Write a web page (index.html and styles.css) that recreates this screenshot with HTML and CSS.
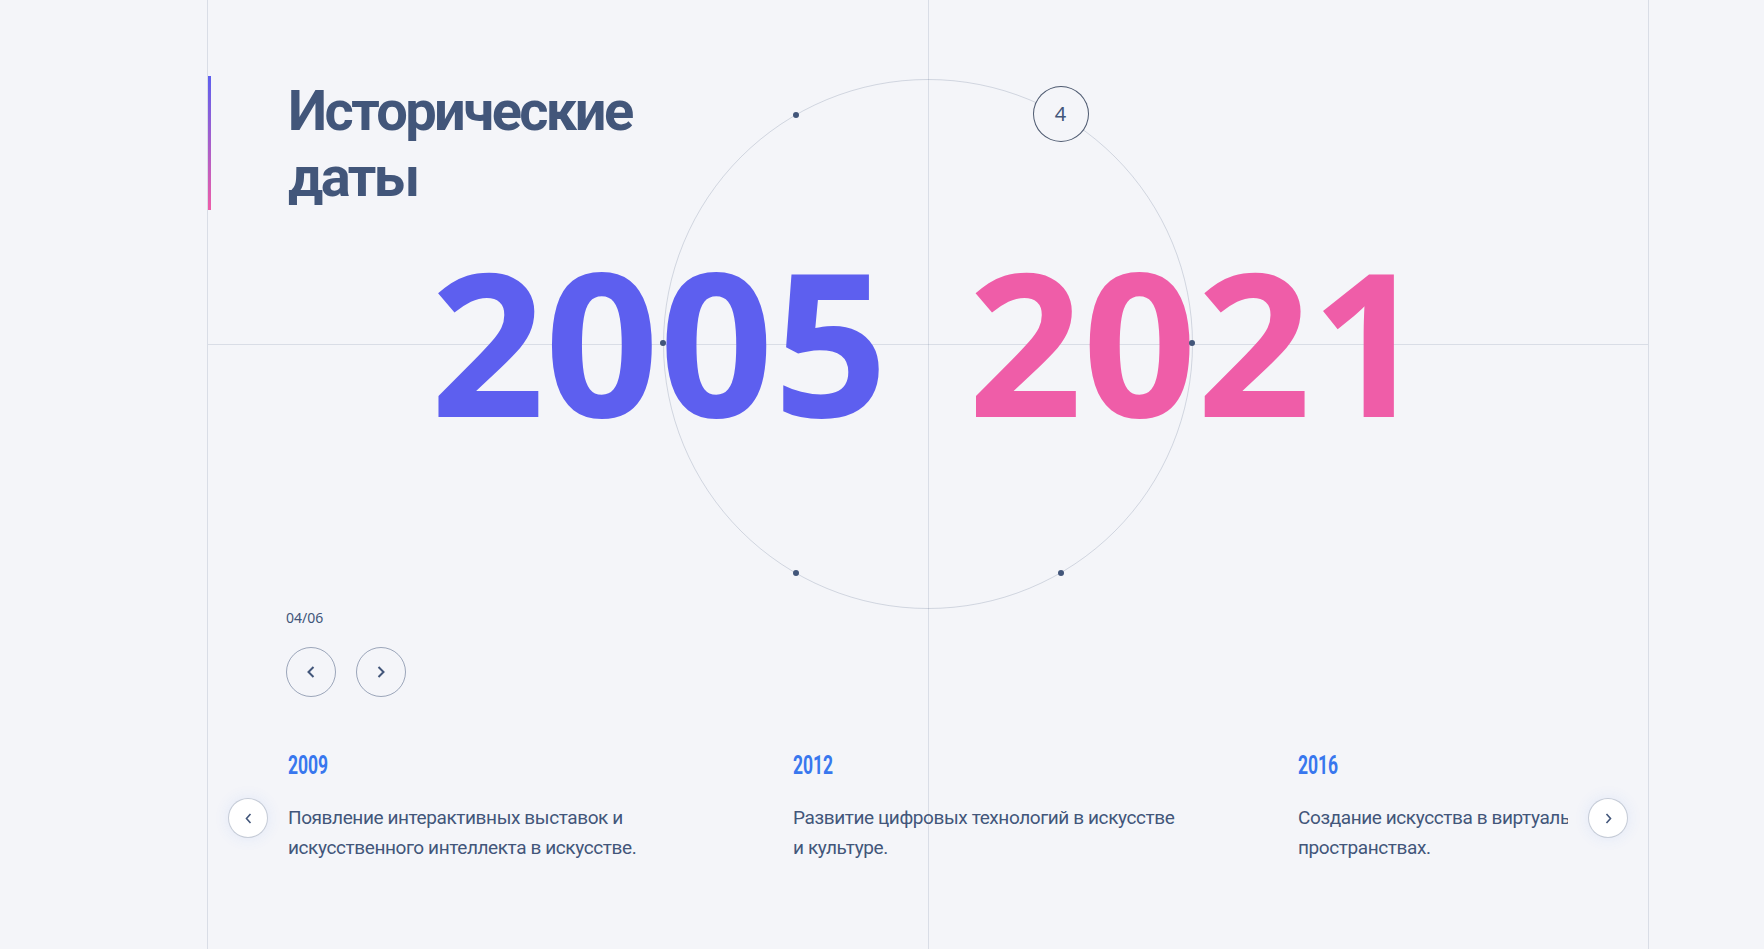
FILE: index.html
```html
<!DOCTYPE html>
<html lang="ru">
<head>
<meta charset="utf-8">
<title>Исторические даты</title>
<link rel="stylesheet" href="styles.css">
</head>
<body>
<section class="dates">
  <div class="deco">
    <div class="hline"></div>
    <div class="vline"></div>
    <div class="ring">
      <span class="dot p1"></span>
      <span class="dot p3"></span>
      <span class="dot p4"></span>
      <span class="dot p5"></span>
      <span class="dot p6"></span>
      <span class="active-point">4</span>
    </div>
  </div>

  <h1 class="title">Исторические<br>даты</h1>

  <div class="years">
    <span class="year-from">2005</span>
    <span class="year-to">2021</span>
  </div>

  <div class="pager">
    <div class="count">04/06</div>
    <div class="pager-buttons">
      <button class="round-btn" aria-label="Назад">
        <svg width="8" height="12" viewBox="0 0 8 12"><path d="M6.5 1 L1.5 6 L6.5 11" fill="none" stroke="#42567A" stroke-width="2"/></svg>
      </button>
      <button class="round-btn" aria-label="Вперёд">
        <svg width="8" height="12" viewBox="0 0 8 12"><path d="M1.5 1 L6.5 6 L1.5 11" fill="none" stroke="#42567A" stroke-width="2"/></svg>
      </button>
    </div>
  </div>

  <div class="events">
    <button class="ev-arrow" aria-label="Предыдущее">
      <svg width="7" height="11" viewBox="0 0 7 11"><path d="M5.5 1 L1.5 5.5 L5.5 10" fill="none" stroke="#42567A" stroke-width="1.6"/></svg>
    </button>
    <div class="ev-viewport">
      <div class="ev-track">
        <article class="event">
          <div class="event-year"><span>2009</span></div>
          <p class="event-text">Появление интерактивных выставок и искусственного интеллекта в искусстве.</p>
        </article>
        <article class="event">
          <div class="event-year"><span>2012</span></div>
          <p class="event-text">Развитие цифровых технологий в искусстве и культуре.</p>
        </article>
        <article class="event">
          <div class="event-year"><span>2016</span></div>
          <p class="event-text">Создание искусства в виртуальных пространствах.</p>
        </article>
      </div>
    </div>
    <button class="ev-arrow" aria-label="Следующее">
      <svg width="7" height="11" viewBox="0 0 7 11"><path d="M1.5 1 L5.5 5.5 L1.5 10" fill="none" stroke="#42567A" stroke-width="1.6"/></svg>
    </button>
  </div>
</section>
</body>
</html>
```
FILE: styles.css
```css
* { box-sizing: border-box; }

html, body {
  margin: 0;
  padding: 0;
  background: #F4F5F9;
}

body {
  font-family: "Roboto", "Noto Sans", sans-serif;
  color: #42567A;
  overflow: hidden;
}

.dates {
  position: relative;
  margin-left: 207px;
  width: 1442px;
  height: 949px;
  padding-top: 76px;
  border-left: 1px solid rgba(66, 86, 122, 0.15);
  border-right: 1px solid rgba(66, 86, 122, 0.15);
}

/* decorative canvas */
.deco {
  position: absolute;
  inset: 0;
  pointer-events: none;
}

.hline {
  position: absolute;
  left: 0;
  right: 0;
  top: 344px;
  height: 1px;
  background: rgba(66, 86, 122, 0.15);
}

.vline {
  position: absolute;
  top: 0;
  bottom: 0;
  left: 720px;
  width: 1px;
  background: rgba(66, 86, 122, 0.15);
}

.ring {
  position: absolute;
  left: 455px;
  top: 79px;
  width: 530px;
  height: 530px;
  border: 1px solid rgba(66, 86, 122, 0.2);
  border-radius: 50%;
  z-index: 2;
}

.dot {
  position: absolute;
  width: 6px;
  height: 6px;
  margin: -4px 0 0 -4px;
  border-radius: 50%;
  background: #42567A;
}

.p1 { left: 132.5px; top: 35.5px; }
.p3 { left: 529px; top: 264px; }
.p4 { left: 397.5px; top: 493.5px; }
.p5 { left: 132.5px; top: 493.5px; }
.p6 { left: 0; top: 264px; }

.active-point {
  position: absolute;
  left: 396.5px;
  top: 34.5px;
  width: 56px;
  height: 56px;
  margin: -29px 0 0 -28px;
  border-radius: 50%;
  border: 1px solid rgba(48, 62, 88, 0.85);
  background: #F4F5F9;
  display: flex;
  align-items: center;
  justify-content: center;
  font-family: "Noto Sans", sans-serif;
  font-size: 20px;
  color: #42567A;
}

/* title */
.title {
  position: relative;
  margin: 0;
  padding: 2px 0 0 77px;
  border-left: 3px solid;
  border-image: linear-gradient(180deg, #5D5FEF 0%, #EF5DA8 100%) 1;
  font-family: "Roboto", "Noto Sans", sans-serif;
  font-size: 56px;
  line-height: 66px;
  font-weight: 700;
  letter-spacing: -2.6px;
  color: #42567A;
}

/* years */
.years {
  position: relative;
  z-index: 1;
  margin-top: 30px;
  display: flex;
  justify-content: center;
  gap: 80px;
  font-family: "Noto Sans", sans-serif;
  font-size: 200px;
  line-height: 200px;
  font-weight: 700;
}

.year-from { color: #5D5FEF; }
.year-to { color: #EF5DA8; }

/* pager */
.pager {
  margin-top: 168px;
  padding-left: 78px;
}

.count {
  font-family: "Noto Sans", sans-serif;
  font-size: 14px;
  line-height: 20px;
  color: #42567A;
}

.pager-buttons {
  margin-top: 19px;
  display: flex;
  gap: 20px;
}

.round-btn {
  width: 50px;
  height: 50px;
  padding: 0;
  border: 1px solid rgba(66, 86, 122, 0.5);
  border-radius: 50%;
  background: transparent;
  display: flex;
  align-items: center;
  justify-content: center;
  cursor: pointer;
}

/* events slider */
.events {
  margin-top: 54px;
  padding: 0 20px;
  display: flex;
  gap: 20px;
  align-items: flex-start;
}

.ev-arrow {
  flex: none;
  width: 40px;
  height: 40px;
  margin-top: 47px;
  padding: 0;
  border: 1px solid rgba(66, 86, 122, 0.3);
  border-radius: 50%;
  background: #FFFFFF;
  box-shadow: 0 0 15px rgba(56, 119, 238, 0.1);
  display: flex;
  align-items: center;
  justify-content: center;
  cursor: pointer;
}

.ev-viewport {
  width: 1280px;
  overflow: hidden;
}

.ev-track {
  display: flex;
  gap: 115px;
}

.event {
  flex: none;
  width: 390px;
}

.event-year {
  height: 30px;
  font-family: "Roboto", "Liberation Sans", sans-serif;
  font-weight: 700;
  font-size: 25px;
  line-height: 30px;
  color: #3877EE;
}

.event-year span {
  display: inline-block;
  transform: scaleX(0.7);
  transform-origin: left center;
}

.event-text {
  margin: 22px 0 0;
  font-family: "Roboto", "Noto Sans", sans-serif;
  font-size: 19px;
  line-height: 30px;
  letter-spacing: -0.4px;
  color: #42567A;
}
```
